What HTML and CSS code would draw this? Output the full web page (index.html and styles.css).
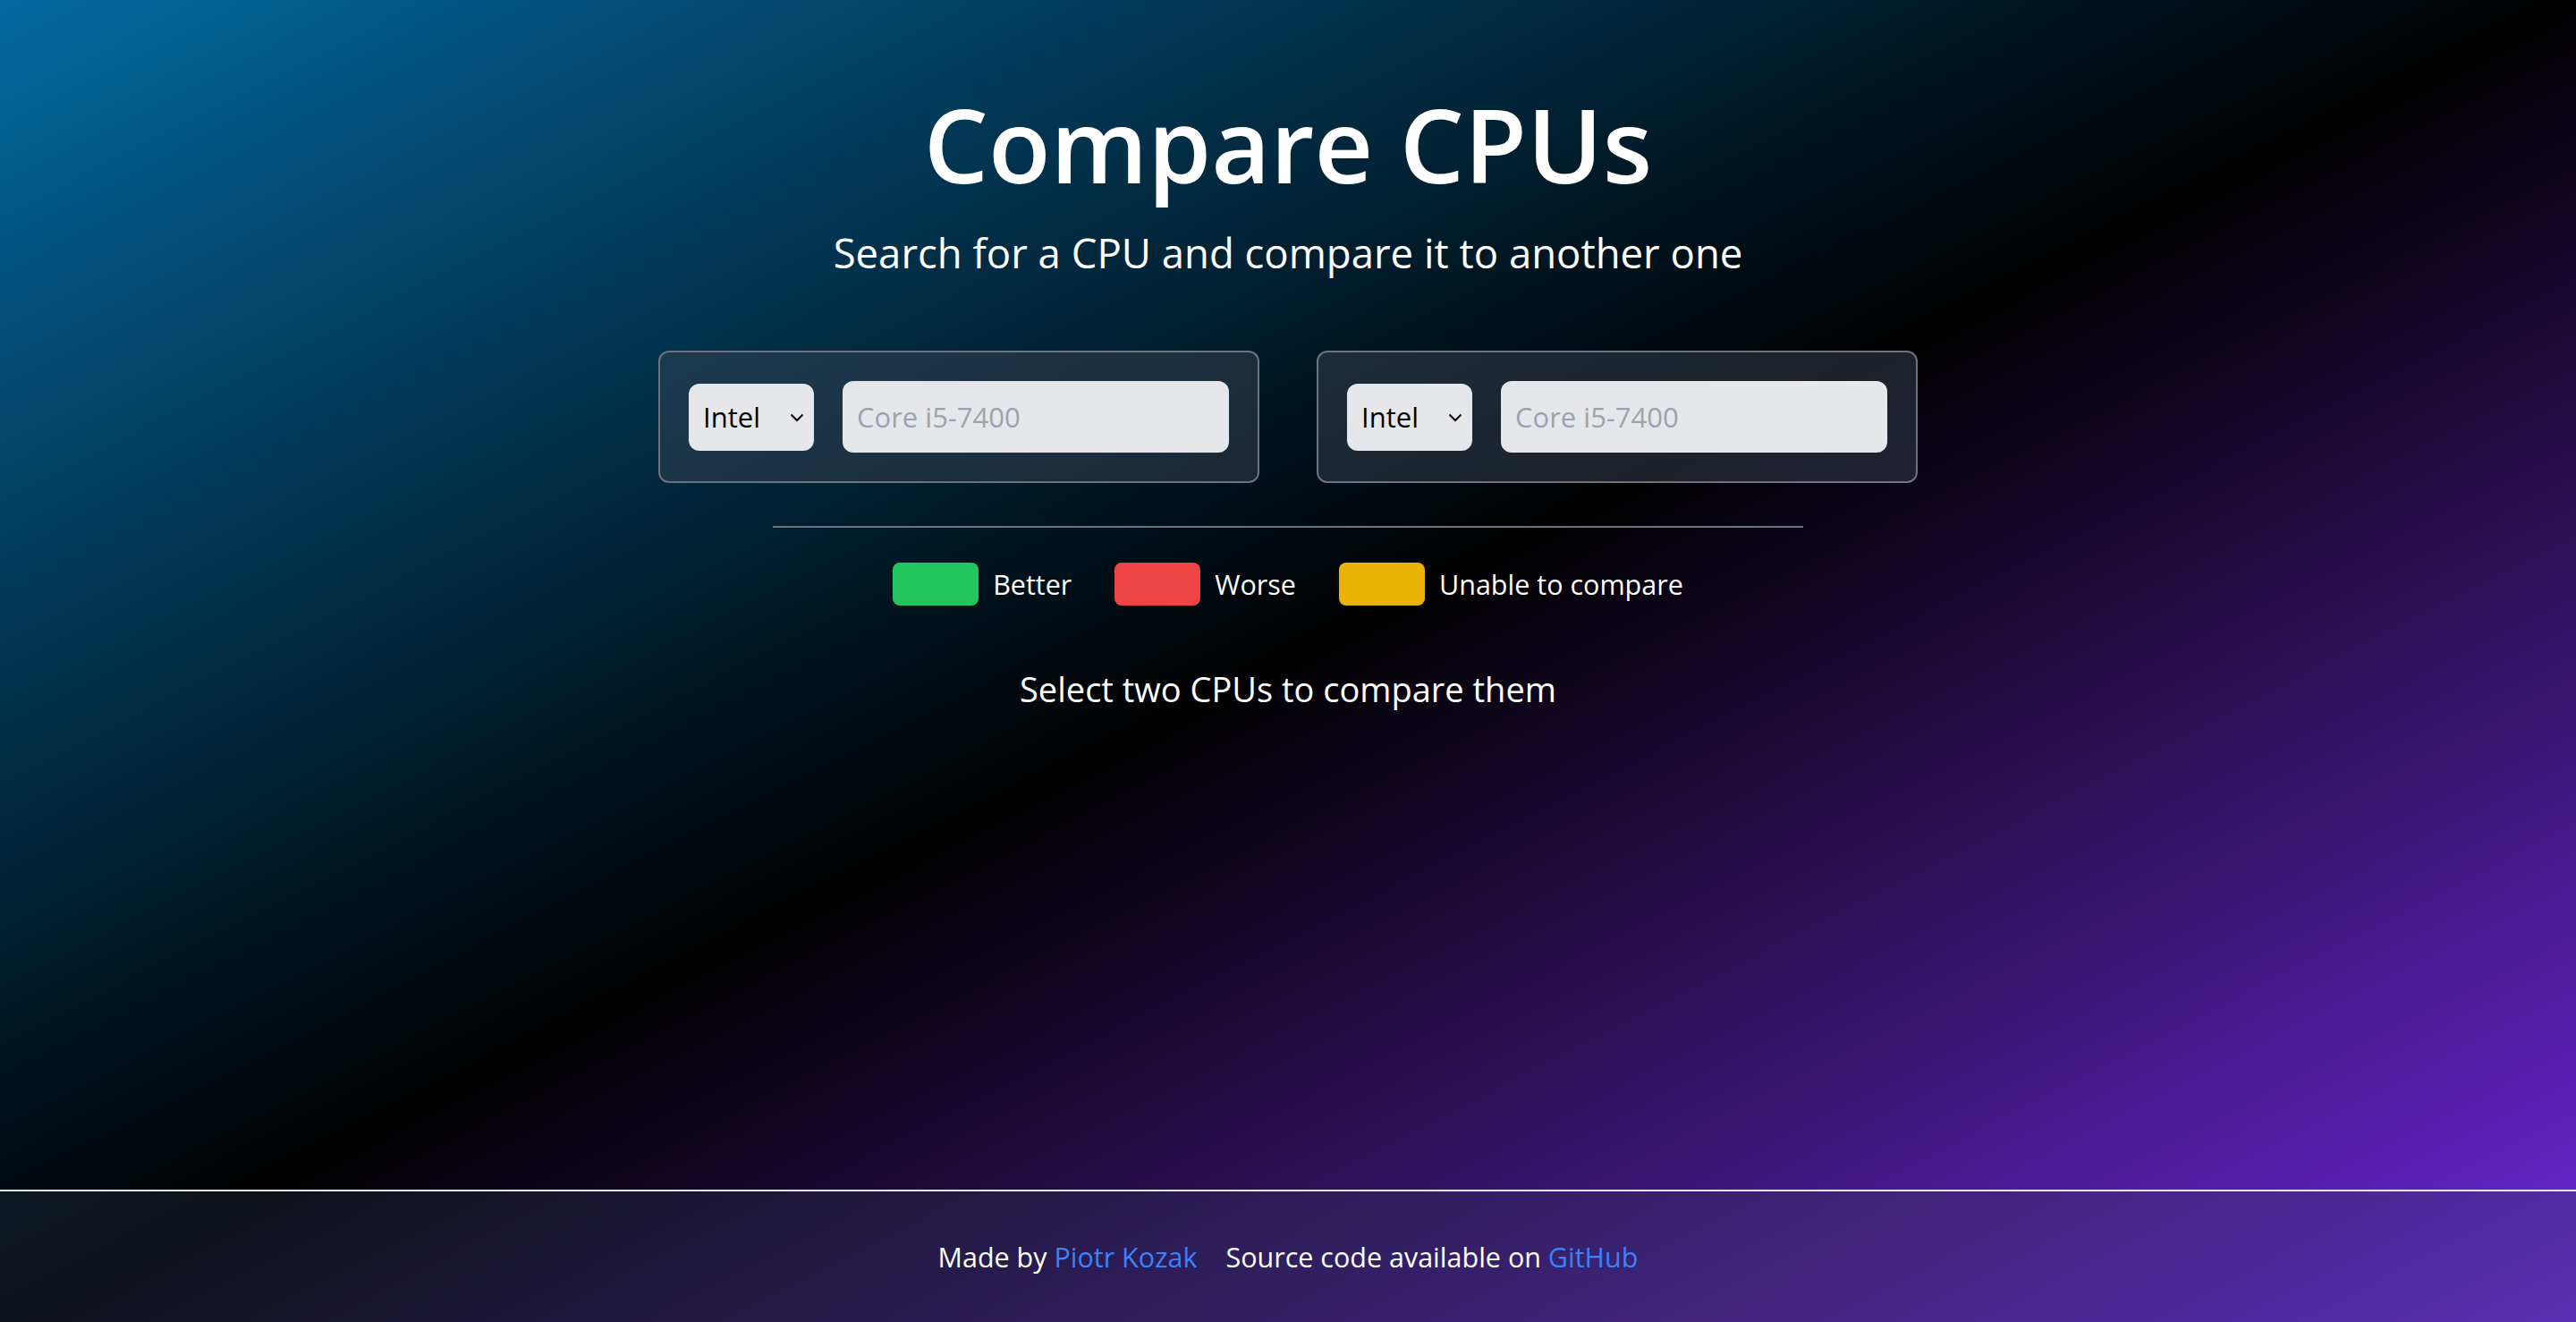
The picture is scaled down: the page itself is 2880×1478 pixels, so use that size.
FILE: index.html
```html
<!DOCTYPE html>
<html lang="en">
<head>
<meta charset="utf-8">
<title>Compare CPUs</title>
<link rel="stylesheet" href="styles.css">
</head>
<body>
<div class="page">
  <main class="main">
    <h1 class="title">Compare CPUs</h1>
    <p class="subtitle">Search for a CPU and compare it to another one</p>
    <div class="pickers">
      <div class="card">
        <div class="select-wrap">
          <select class="brand"><option>Intel</option><option>AMD</option></select>
          <svg class="chevron" width="16" height="10" viewBox="0 0 16 10"><polyline points="1.5,1.5 8,8 14.5,1.5" fill="none" stroke="#000" stroke-width="2"/></svg>
        </div>
        <input class="search" type="text" placeholder="Core i5-7400">
      </div>
      <div class="card">
        <div class="select-wrap">
          <select class="brand"><option>Intel</option><option>AMD</option></select>
          <svg class="chevron" width="16" height="10" viewBox="0 0 16 10"><polyline points="1.5,1.5 8,8 14.5,1.5" fill="none" stroke="#000" stroke-width="2"/></svg>
        </div>
        <input class="search" type="text" placeholder="Core i5-7400">
      </div>
    </div>
    <hr class="divider">
    <div class="legend">
      <div class="legend-item"><span class="swatch swatch-better"></span><span>Better</span></div>
      <div class="legend-item"><span class="swatch swatch-worse"></span><span>Worse</span></div>
      <div class="legend-item"><span class="swatch swatch-unable"></span><span>Unable to compare</span></div>
    </div>
    <p class="hint">Select two CPUs to compare them</p>
  </main>
  <footer class="footer">
    <span>Made by <a class="link" href="#">Piotr Kozak</a></span>
    <span>Source code available on <a class="link" href="#">GitHub</a></span>
  </footer>
</div>
</body>
</html>
```

FILE: styles.css
```css
* { box-sizing: border-box; }
html, body { margin: 0; padding: 0; }
body {
  font-family: "Open Sans", "Noto Sans", sans-serif;
  color: #fff;
}
.page {
  min-height: 100vh;
  display: flex;
  flex-direction: column;
  background: linear-gradient(to bottom right, #0369a1 0%, #000 50%, #6d28d9 100%);
}
.main {
  flex: 1;
  display: flex;
  flex-direction: column;
  align-items: center;
  padding-top: 101px;
}
.title {
  margin: 0;
  font-size: 114px;
  line-height: 120px;
  font-weight: 600;
}
.subtitle {
  margin: 29px 0 0;
  font-size: 45.5px;
  line-height: 64px;
}
.pickers {
  margin-top: 78px;
  display: flex;
  gap: 64px;
}
.card {
  display: flex;
  align-items: center;
  gap: 32px;
  padding: 32px;
  border: 2px solid #6b7280;
  border-radius: 12px;
  background: rgba(55, 65, 81, 0.5);
}
.select-wrap {
  position: relative;
  display: flex;
}
.brand {
  appearance: none;
  -webkit-appearance: none;
  width: 140px;
  height: 75px;
  border: none;
  border-radius: 12px;
  background: #e5e7eb;
  color: #000;
  font-family: inherit;
  font-size: 31px;
  padding: 0 0 0 16px;
  margin: 0;
  outline: none;
}
.chevron {
  position: absolute;
  right: 11px;
  top: 33px;
  pointer-events: none;
}
.search {
  width: 432px;
  height: 80px;
  border: none;
  border-radius: 12px;
  background: #e5e7eb;
  color: #000;
  font-family: inherit;
  font-size: 31px;
  padding: 0 16px;
  margin: 0;
  outline: none;
}
.search::placeholder { color: #9ca3af; }
.divider {
  width: 1152px;
  height: 2px;
  margin: 48px 0 0;
  border: none;
  background: #6b7280;
}
.legend {
  margin-top: 39px;
  display: flex;
  gap: 48px;
}
.legend-item {
  display: flex;
  align-items: center;
  gap: 16px;
  font-size: 30.5px;
  line-height: 48px;
}
.swatch {
  width: 96px;
  height: 48px;
  border-radius: 8px;
}
.swatch-better { background: #22c55e; }
.swatch-worse { background: #ef4444; }
.swatch-unable { background: #eab308; }
.hint {
  margin: 65px 0 0;
  font-size: 38px;
  line-height: 56px;
}
.footer {
  border-top: 2px solid #e5e7eb;
  background: rgba(48, 60, 87, 0.3);
  display: flex;
  justify-content: center;
  gap: 32px;
  padding: 49px 0;
  font-size: 30.5px;
  line-height: 48px;
}
.link {
  color: #3b82f6;
  text-decoration: none;
}
```
